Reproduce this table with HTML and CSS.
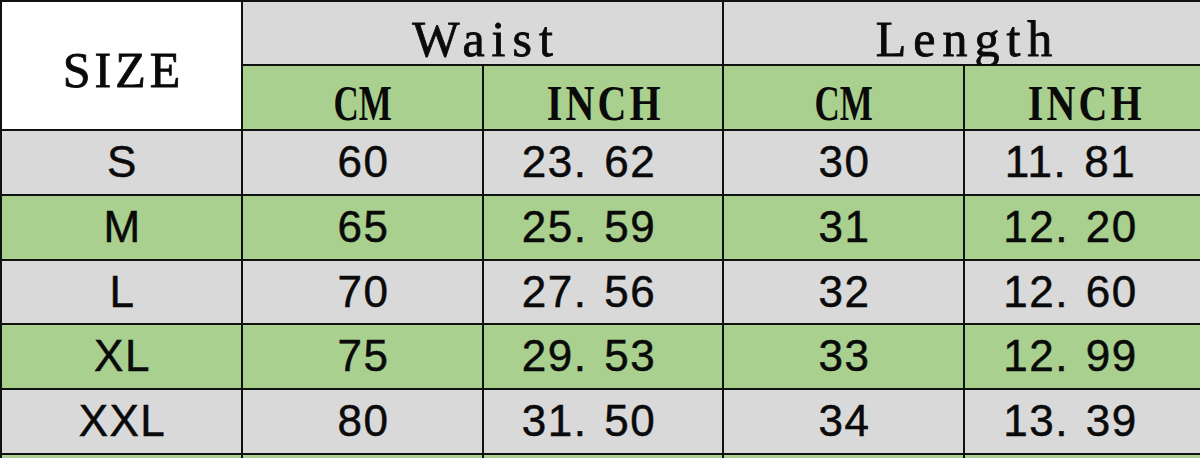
FILE: index.html
```html
<!DOCTYPE html>
<html lang="en">
<head>
<meta charset="utf-8">
<title>Size Chart</title>
<link rel="stylesheet" href="styles.css">
</head>
<body>
<div class="chart">
  <div class="cell white size-head"><span class="hw hw-size">SIZE</span></div>
  <div class="cell gray span2 head-top"><span class="hw hw-waist">Waist</span></div>
  <div class="cell gray span2 head-top"><span class="hw hw-length">Length</span></div>

  <div class="cell green head-sub"><span class="hw hw-cm">CM</span></div>
  <div class="cell green head-sub"><span class="hw hw-inch">INCH</span></div>
  <div class="cell green head-sub"><span class="hw hw-cm">CM</span></div>
  <div class="cell green head-sub"><span class="hw hw-inch">INCH</span></div>

  <div class="cell gray num">S</div>
  <div class="cell gray num">60</div>
  <div class="cell gray num dec">23<span class="dot">.</span>62</div>
  <div class="cell gray num">30</div>
  <div class="cell gray num dec">11<span class="dot">.</span>81</div>

  <div class="cell green num">M</div>
  <div class="cell green num">65</div>
  <div class="cell green num dec">25<span class="dot">.</span>59</div>
  <div class="cell green num">31</div>
  <div class="cell green num dec">12<span class="dot">.</span>20</div>

  <div class="cell gray num">L</div>
  <div class="cell gray num">70</div>
  <div class="cell gray num dec">27<span class="dot">.</span>56</div>
  <div class="cell gray num">32</div>
  <div class="cell gray num dec">12<span class="dot">.</span>60</div>

  <div class="cell green num">XL</div>
  <div class="cell green num">75</div>
  <div class="cell green num dec">29<span class="dot">.</span>53</div>
  <div class="cell green num">33</div>
  <div class="cell green num dec">12<span class="dot">.</span>99</div>

  <div class="cell gray num">XXL</div>
  <div class="cell gray num">80</div>
  <div class="cell gray num dec">31<span class="dot">.</span>50</div>
  <div class="cell gray num">34</div>
  <div class="cell gray num dec">13<span class="dot">.</span>39</div>

  <div class="cell green"></div>
  <div class="cell green"></div>
  <div class="cell green"></div>
  <div class="cell green"></div>
  <div class="cell green"></div>
</div>
</body>
</html>
```

FILE: styles.css
```css
html, body {
  margin: 0;
  padding: 0;
  overflow: hidden;
  background: #ffffff;
}

.chart {
  display: grid;
  grid-template-columns: 239px 239px 238px 239px 239px;
  grid-template-rows: 62px 63px 63px 63px 62px 63px 63px 40px;
  gap: 2px;
  padding: 2px 0 0 2px;
  width: max-content;
  background: #111111;
}

.cell {
  display: flex;
  align-items: center;
  justify-content: center;
  color: #0a0a0a;
}

.white { background: #ffffff; }
.gray { background: #d9d9d9; }
.green { background: #a9d08e; }

.size-head {
  grid-row: span 2;
  padding-top: 10px;
}

.span2 { grid-column: span 2; }

.head-top,
.head-sub {
  padding-top: 12px;
}

.hw {
  display: inline-block;
  font-family: "Liberation Serif", "Times New Roman", serif;
  font-size: 50px;
  line-height: 1.1;
  white-space: nowrap;
  -webkit-text-stroke: 0.8px #0a0a0a;
}

.hw-size {
  letter-spacing: 4px;
  margin-right: -4px;
}

.hw-waist {
  letter-spacing: 7px;
  margin-right: -7px;
}

.hw-length {
  letter-spacing: 7px;
  margin-right: -7px;
}

.hw-cm {
  font-weight: bold;
  -webkit-text-stroke: 0;
  transform: scaleX(0.7);
}

.hw-inch {
  font-weight: bold;
  -webkit-text-stroke: 0;
  transform: scaleX(0.8);
  letter-spacing: 4px;
  margin-right: -4px;
}

.num {
  font-family: "Liberation Sans", Arial, sans-serif;
  font-size: 44px;
  line-height: 1.1;
  letter-spacing: 1.5px;
  padding-left: 2px;
  white-space: nowrap;
  -webkit-text-stroke: 0.5px #0a0a0a;
}

.dec {
  padding-right: 30px;
}

.dot {
  margin-right: 17px;
}
```
